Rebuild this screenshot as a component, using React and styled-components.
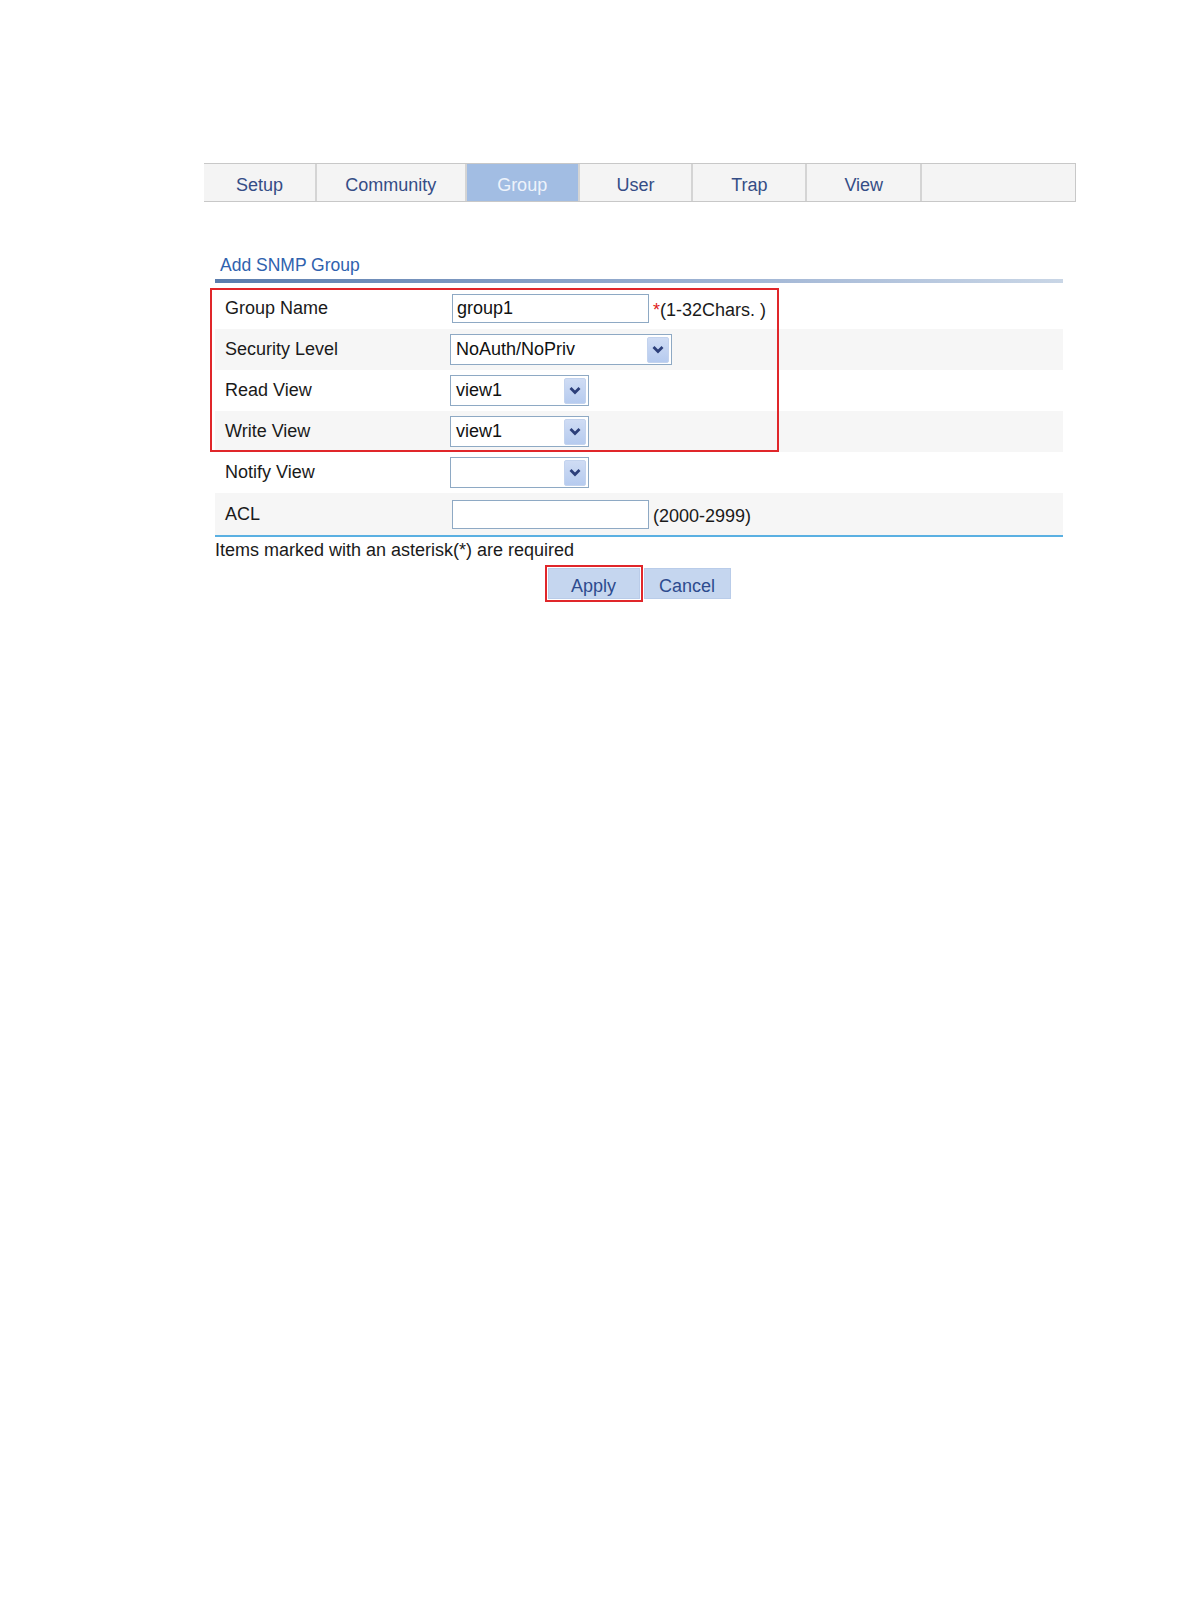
import React from 'react';
import styled, { createGlobalStyle } from 'styled-components';

const Global = createGlobalStyle`
  body {
    margin: 0;
    background: #fff;
    font-family: "Liberation Sans", Arial, sans-serif;
  }
`;

const Page = styled.div`
  width: 1190px;
  min-height: 1616px;
  padding: 163px 0 0 204px;
  box-sizing: border-box;
`;

const TabBar = styled.div`
  display: flex;
  width: 872px;
  height: 39px;
  box-sizing: border-box;
  border: 1px solid #c8c8c8;
  border-left: none;
  background: #f4f4f4;
`;

const Tab = styled.div`
  width: ${({ w }) => w}px;
  box-sizing: border-box;
  border-right: ${({ last }) => (last ? 'none' : '2px solid #d4d4d4')};
  display: flex;
  align-items: center;
  justify-content: center;
  padding-top: 5px;
  font-size: 18px;
  color: ${({ active }) => (active ? '#eef3fb' : '#354d86')};
  background: ${({ active }) => (active ? '#a2bde3' : 'transparent')};
`;

const Section = styled.div`
  margin: 53px 0 0 11px;
  width: 848px;
`;

const Title = styled.div`
  font-size: 17.5px;
  color: #2f62ae;
  padding-left: 5px;
  height: 24px;
`;

const TitleBar = styled.div`
  height: 4px;
  background: linear-gradient(to right, #5a7cad, #9fb4d4 60%, #c9d6e6);
`;

const Rows = styled.div`
  margin-top: 5px;
  border-bottom: 2px solid #5ab0e2;
`;

const Marked = styled.div`
  position: relative;
`;

const Row = styled.div`
  display: flex;
  align-items: center;
  height: ${({ h }) => h || 41}px;
  background: ${({ shaded }) => (shaded ? '#f6f6f6' : '#fff')};
`;

const Label = styled.div`
  width: 235px;
  padding-left: 10px;
  box-sizing: border-box;
  font-size: 18px;
  color: #1a1a1a;
`;

const TextInput = styled.div`
  width: ${({ w }) => w}px;
  height: 29px;
  margin-left: 2px;
  box-sizing: border-box;
  border: 1px solid #8ea9c4;
  display: flex;
  align-items: center;
  padding-left: 4px;
  font-size: 18px;
  color: #111;
  background: #fff;
`;

const Hint = styled.span`
  margin-left: 4px;
  margin-top: 4px;
  font-size: 18px;
  color: #1a1a1a;
`;

const Star = styled.span`
  color: #e02020;
`;

const SelectBox = styled.div`
  width: ${({ w }) => w}px;
  height: 31px;
  box-sizing: border-box;
  border: 1px solid #8ea9c4;
  display: flex;
  align-items: center;
  background: #fff;
`;

const SelectText = styled.div`
  flex: 1;
  padding-left: 5px;
  font-size: 18px;
  color: #111;
`;

const Arrow = styled.div`
  width: 22px;
  height: 26px;
  margin-right: 2px;
  border-radius: 2px;
  box-sizing: border-box;
  background: linear-gradient(#cfdcf4, #b6cbef);
  border: 1px solid #c3d3ee;
  display: flex;
  align-items: center;
  justify-content: center;
`;

const Note = styled.div`
  font-size: 18px;
  color: #1a1a1a;
  height: 25px;
  display: flex;
  align-items: center;
  padding-top: 1px;
  box-sizing: border-box;
`;

const Buttons = styled.div`
  display: flex;
  justify-content: center;
  gap: 4px;
  padding-top: 6px;
`;

const Button = styled.div`
  width: ${({ w }) => w}px;
  height: 31px;
  box-sizing: border-box;
  background: #c5d6ef;
  border: 1px solid #b9cce9;
  display: flex;
  align-items: center;
  justify-content: center;
  padding-top: 5px;
  font-size: 18px;
  color: #2d4b8e;
  outline: ${({ marked }) => (marked ? '2px solid #e0262a' : 'none')};
  outline-offset: 1px;
`;

const Highlight = styled.div`
  position: absolute;
  left: -5px;
  top: 0;
  bottom: 0;
  width: 569px;
  box-sizing: border-box;
  border: 2px solid #e0262a;
  pointer-events: none;
`;

const Chevron = () => (
  <svg width="12" height="9" viewBox="0 0 12 9">
    <path d="M1.5 2 L6 6.5 L10.5 2" fill="none" stroke="#2c3f7a" strokeWidth="2.8" />
  </svg>
);

const Select = ({ w, value }) => (
  <SelectBox w={w}>
    <SelectText>{value}</SelectText>
    <Arrow>
      <Chevron />
    </Arrow>
  </SelectBox>
);

const tabs = [
  { name: 'Setup', w: 113 },
  { name: 'Community', w: 150 },
  { name: 'Group', w: 113 },
  { name: 'User', w: 114 },
  { name: 'Trap', w: 114 },
  { name: 'View', w: 115 },
  { name: '', w: 153, last: true },
];

export default function App() {
  return (
    <Page>
      <Global />
      <TabBar>
        {tabs.map((t) => (
          <Tab key={t.w + t.name} w={t.w} active={t.name === 'Group'} last={t.last}>
            {t.name}
          </Tab>
        ))}
      </TabBar>

      <Section>
        <Title>Add SNMP Group</Title>
        <TitleBar />
        <Rows>
          <Marked>
            <Row>
              <Label>Group Name</Label>
              <TextInput w={197}>group1</TextInput>
              <Hint>
                <Star>*</Star>(1-32Chars. )
              </Hint>
            </Row>
            <Row shaded>
              <Label>Security Level</Label>
              <Select w={222} value="NoAuth/NoPriv" />
            </Row>
            <Row>
              <Label>Read View</Label>
              <Select w={139} value="view1" />
            </Row>
            <Row shaded>
              <Label>Write View</Label>
              <Select w={139} value="view1" />
            </Row>
            <Highlight />
          </Marked>
          <Row>
            <Label>Notify View</Label>
            <Select w={139} value="" />
          </Row>
          <Row shaded h={42}>
            <Label>ACL</Label>
            <TextInput w={197} />
            <Hint>(2000-2999)</Hint>
          </Row>
        </Rows>
        <Note>Items marked with an asterisk(*) are required</Note>
        <Buttons>
          <Button w={92} marked>Apply</Button>
          <Button w={87}>Cancel</Button>
        </Buttons>
      </Section>
    </Page>
  );
}
